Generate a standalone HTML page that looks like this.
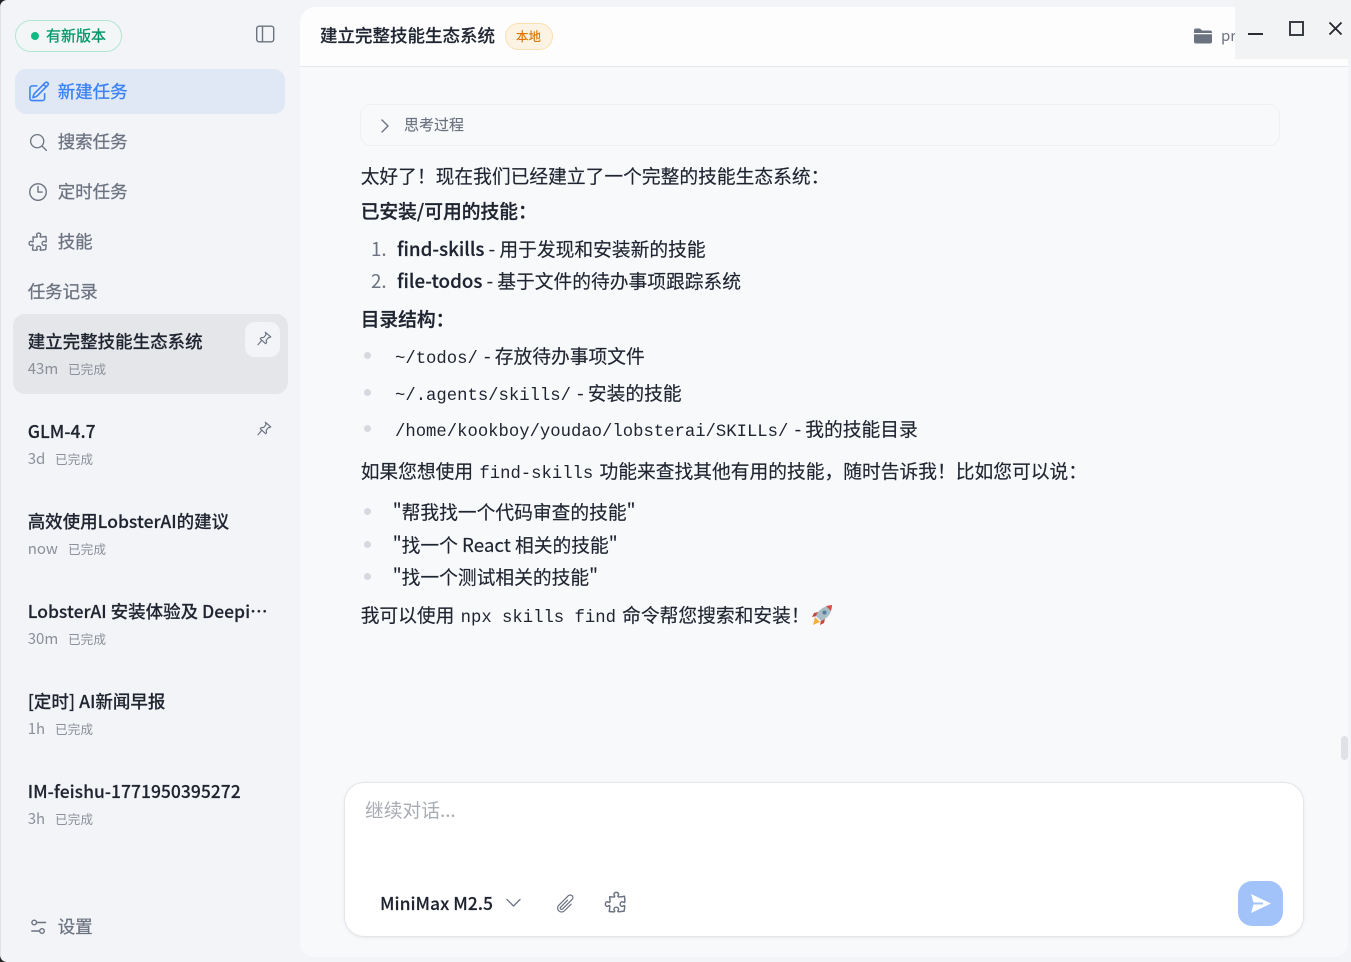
<!DOCTYPE html>
<html lang="zh-CN">
<head>
<meta charset="utf-8">
<title>LobsterAI</title>
<style>
html,body{margin:0;padding:0;width:1351px;height:962px;overflow:hidden;background:#f3f4f7;}
body{position:relative;font-family:"Noto Sans CJK SC","Liberation Sans",sans-serif;color:#1f2430;}
.t{position:absolute;white-space:nowrap;line-height:24px;height:24px;}
.abs{position:absolute;}
svg{position:absolute;overflow:visible;fill:none;}
.nav{font-size:17.5px;color:#6b7280;left:57.7px;-webkit-text-stroke:.25px #6b7280;}
.title{font-size:17.5px;color:#1f2430;left:27.7px;font-weight:500;-webkit-text-stroke:.15px #1f2430;}
.time{font-size:15px;color:#8b909a;left:27.7px;}
.st{font-size:12.7px;color:#8b909a;}
.b{font-size:18.75px;color:#1f2430;left:360.7px;-webkit-text-stroke:.15px #1f2430;}
.s{font-weight:500;-webkit-text-stroke:.3px #1f2430;}
.m{font-family:"Liberation Mono",monospace;font-size:17.25px;padding:0 2px;-webkit-text-stroke:0;}
.dot{position:absolute;width:7px;height:7px;border-radius:50%;background:#d6d9df;}
.li{font-size:18.75px;color:#1f2430;-webkit-text-stroke:.15px #1f2430;}
.li b{font-weight:500;-webkit-text-stroke:.2px #1f2430;}
</style>
</head>
<body>
<div class="abs" style="left:0;top:0;width:1351px;height:962px;background:#f3f4f7;"></div>
<div class="abs" style="left:0;top:0;width:1px;height:962px;background:#e2e3e6;"></div>

<!-- main panel -->
<div class="abs" style="left:300px;top:7px;width:1048px;height:950px;background:#f8f9fb;border-radius:16px 0 14px 14px;overflow:hidden;">
  <div class="abs" style="left:0;top:0;width:1048px;height:59px;background:#fdfdfe;border-bottom:1px solid #e3e6ee;"></div>
</div>

<!-- sidebar top -->
<div class="abs" style="left:15px;top:20px;width:105px;height:30px;border:1px solid #b3e6d0;border-radius:16px;background:#f3f6f6;"></div>
<div class="abs" style="left:31px;top:32px;width:8px;height:8px;border-radius:50%;background:#10b981;"></div>
<div class="t" style="left:46px;top:24px;font-size:15px;color:#059669;-webkit-text-stroke:.3px #059669;">有新版本</div>
<svg style="left:256px;top:25px;" width="18" height="18" viewBox="0 0 18 18"><rect x=".7" y="1.200" width="17" height="15.600" rx="2.500" stroke="#6b7280" stroke-width="1.400"/><path d="M6.500 1.200V16.800" stroke="#6b7280" stroke-width="1.400"/></svg>

<div class="abs" style="left:15px;top:69px;width:270px;height:45px;background:#e1e8f5;border-radius:11px;"></div>
<svg style="left:27px;top:80px;" width="23.500" height="23.500" viewBox="0 0 24 24"><path d="m16.862 4.487 1.687-1.688a1.875 1.875 0 1 1 2.652 2.652L10.582 16.070a4.500 4.500 0 0 1-1.897 1.130L6 18l.8-2.685a4.500 4.500 0 0 1 1.130-1.897l8.932-8.931Zm0 0L19.500 7.125M18 14v4.750A2.250 2.250 0 0 1 15.750 21H5.250A2.250 2.250 0 0 1 3 18.750V8.250A2.250 2.250 0 0 1 5.250 6H10" stroke="#3b82f6" stroke-width="1.600" stroke-linecap="round" stroke-linejoin="round"/></svg>
<div class="t nav" style="top:80px;color:#3b82f6;-webkit-text-stroke:.3px #3b82f6;">新建任务</div>

<svg style="left:28px;top:131.500px;" width="21" height="21" viewBox="0 0 24 24"><path d="m21 21-5.197-5.197m0 0A7.500 7.500 0 1 0 5.196 5.196a7.500 7.500 0 0 0 10.607 10.607Z" stroke="#6b7280" stroke-width="1.500" stroke-linecap="round" stroke-linejoin="round"/></svg>
<div class="t nav" style="top:130px;">搜索任务</div>

<svg style="left:27px;top:181px;" width="22" height="22" viewBox="0 0 24 24"><path d="M12 6v6h4.500m4.500 0a9 9 0 1 1-18 0 9 9 0 0 1 18 0Z" stroke="#6b7280" stroke-width="1.500" stroke-linecap="round" stroke-linejoin="round"/></svg>
<div class="t nav" style="top:180px;">定时任务</div>

<svg style="left:27px;top:231px;" width="22" height="22" viewBox="0 0 24 24"><path d="M14.250 6.087c0-.355.186-.676.401-.959.221-.29.349-.634.349-1.003 0-1.036-1.007-1.875-2.250-1.875s-2.250.84-2.250 1.875c0 .369.128.713.349 1.003.215.283.401.604.401.959a.64.64 0 0 1-.657.643 48.390 48.390 0 0 1-4.163-.3c.186 1.613.293 3.250.315 4.907a.656.656 0 0 1-.658.663c-.355 0-.676-.186-.959-.401a1.647 1.647 0 0 0-1.003-.349c-1.036 0-1.875 1.007-1.875 2.250s.84 2.250 1.875 2.250c.369 0 .713-.128 1.003-.349.283-.215.604-.401.959-.401.31 0 .555.26.532.57a48.039 48.039 0 0 1-.642 5.056c1.518.19 3.058.309 4.616.354a.64.64 0 0 0 .657-.643c0-.355-.186-.676-.401-.959a1.647 1.647 0 0 1-.349-1.003c0-1.035 1.008-1.875 2.250-1.875 1.243 0 2.250.84 2.250 1.875 0 .369-.128.713-.349 1.003-.215.283-.4.604-.4.959 0 .333.277.599.61.58a48.100 48.100 0 0 0 5.427-.63 48.050 48.050 0 0 0 .582-4.717.532.532 0 0 0-.533-.57c-.355 0-.676.186-.959.401-.29.221-.634.349-1.003.349-1.035 0-1.875-1.007-1.875-2.250s.84-2.250 1.875-2.250c.37 0 .713.128 1.003.349.283.215.604.401.96.401a.656.656 0 0 0 .658-.663 48.422 48.422 0 0 0-.37-5.360c-1.886.342-3.810.574-5.766.689a.578.578 0 0 1-.61-.58Z" stroke="#6b7280" stroke-width="1.500" stroke-linejoin="round"/></svg>
<div class="t nav" style="top:230px;">技能</div>

<div class="t nav" style="left:27.700px;top:280px;">任务记录</div>

<!-- tasks -->
<div class="abs" style="left:13px;top:314px;width:275px;height:80px;background:#e5e6e9;border-radius:12px;"></div>
<div class="abs" style="left:245px;top:322px;width:35px;height:35px;background:#f3f4f7;border-radius:10px;"></div>
<svg style="left:257px;top:331px;" width="15" height="15" viewBox="0 0 15 15"><path d="M8.300 1.200l5.500 4.700-1.300.7-.9-.2-2.400 2.900.4 2.300-1 1.100-5.400-5 1-1.100 2.400 0 2.400-2.900-.2-1zM4.400 9.800L1 13.800" stroke="#6b7280" stroke-width="1.150" stroke-linejoin="round" stroke-linecap="round"/></svg>
<div class="t title" style="top:330px;">建立完整技能生态系统</div>
<div class="t time" style="top:357px;">43m</div><div class="t st" style="left:68px;top:357px;">已完成</div>

<svg style="left:257px;top:421px;" width="15" height="15" viewBox="0 0 15 15"><path d="M8.300 1.200l5.500 4.700-1.300.7-.9-.2-2.400 2.900.4 2.300-1 1.100-5.400-5 1-1.100 2.400 0 2.400-2.900-.2-1zM4.400 9.800L1 13.800" stroke="#6b7280" stroke-width="1.150" stroke-linejoin="round" stroke-linecap="round"/></svg>
<div class="t title" style="top:420px;">GLM-4.7</div>
<div class="t time" style="top:447px;">3d</div><div class="t st" style="left:55px;top:447px;">已完成</div>

<div class="t title" style="top:510px;">高效使用LobsterAI的建议</div>
<div class="t time" style="top:537px;">now</div><div class="t st" style="left:68px;top:537px;">已完成</div>

<div class="t title" style="top:600px;">LobsterAI 安装体验及 Deepi…</div>
<div class="t time" style="top:627px;">30m</div><div class="t st" style="left:68px;top:627px;">已完成</div>

<div class="t title" style="top:690px;">[定时] AI新闻早报</div>
<div class="t time" style="top:717px;">1h</div><div class="t st" style="left:55px;top:717px;">已完成</div>

<div class="t title" style="top:780px;">IM-feishu-1771950395272</div>
<div class="t time" style="top:807px;">3h</div><div class="t st" style="left:55px;top:807px;">已完成</div>

<svg style="left:31px;top:919px;" width="15" height="16" viewBox="0 0 15 16"><circle cx="3.200" cy="3.500" r="2.300" stroke="#6b7280" stroke-width="1.400"/><path d="M5.800 3.500H14.500" stroke="#6b7280" stroke-width="1.400" stroke-linecap="round"/><circle cx="11" cy="12" r="2.300" stroke="#6b7280" stroke-width="1.400"/><path d="M.8 12H8.500" stroke="#6b7280" stroke-width="1.400" stroke-linecap="round"/></svg>
<div class="t nav" style="top:915px;">设置</div>

<!-- header -->
<div class="t" style="left:320px;top:24px;font-size:17.500px;font-weight:500;color:#1f2430;-webkit-text-stroke:.15px #1f2430;">建立完整技能生态系统</div>
<div class="abs" style="left:505px;top:23px;width:46px;height:25px;border:1px solid #fbdfae;background:#fdf3e3;border-radius:14px;"></div>
<div class="t" style="left:516px;top:24px;font-size:12.500px;color:#d97706;-webkit-text-stroke:.2px #d97706;">本地</div>
<svg style="left:1194px;top:28px;" width="18" height="16" viewBox="0 0 18 16"><path d="M0 2.500A2 2 0 0 1 2 .5h4l2 2h8A2 2 0 0 1 18 4.500v.5H0z" fill="#6b7280"/><path d="M0 6.200h18V13.500a2 2 0 0 1-2 2H2a2 2 0 0 1-2-2z" fill="#6b7280"/></svg>
<div class="t" style="left:1221px;top:24px;font-size:15px;color:#6b7280;">pr</div>

<!-- window controls -->
<div class="abs" style="left:1235px;top:0;width:116px;height:59px;background:#f2f3f5;"></div>
<div class="abs" style="left:1248px;top:33px;width:15px;height:2px;background:#2a2d33;"></div>
<div class="abs" style="left:1288.500px;top:21px;width:11px;height:11px;border:2px solid #3a3d43;"></div>
<svg style="left:1329px;top:22px;" width="13" height="13" viewBox="0 0 13 13"><path d="M.5.5l12 12M12.500.5l-12 12" stroke="#22252b" stroke-width="1.800"/></svg>

<!-- thinking -->
<div class="abs" style="left:360px;top:104px;width:918px;height:40px;border:1px solid #eef0f3;border-radius:11px;background:#f8f9fb;"></div>
<svg style="left:381px;top:119px;" width="8" height="14" viewBox="0 0 8 14"><path d="M1 1l6 6-6 6" stroke="#6b7280" stroke-width="1.400" stroke-linecap="round" stroke-linejoin="round"/></svg>
<div class="t" style="left:404px;top:112.500px;font-size:15px;color:#6b7280;-webkit-text-stroke:.15px #6b7280;">思考过程</div>

<!-- content -->
<div class="t b" style="top:164px;">太好了！现在我们已经建立了一个完整的技能生态系统：</div>
<div class="t b s" style="top:199px;">已安装/可用的技能：</div>
<div class="t li" style="left:371px;top:237px;color:#6b7280;-webkit-text-stroke:0;">1.</div>
<div class="t li" style="left:397px;top:237px;"><b>find-skills</b> - 用于发现和安装新的技能</div>
<div class="t li" style="left:371px;top:269px;color:#6b7280;-webkit-text-stroke:0;">2.</div>
<div class="t li" style="left:397px;top:269px;"><b>file-todos</b> - 基于文件的待办事项跟踪系统</div>
<div class="t b s" style="top:307px;">目录结构：</div>

<div class="dot" style="left:364px;top:352px;"></div>
<div class="t li" style="left:393px;top:344px;"><span class="m">~/todos/</span> - 存放待办事项文件</div>
<div class="dot" style="left:364px;top:389px;"></div>
<div class="t li" style="left:393px;top:381px;"><span class="m">~/.agents/skills/</span> - 安装的技能</div>
<div class="dot" style="left:364px;top:425px;"></div>
<div class="t li" style="left:393px;top:417px;"><span class="m">/home/kookboy/youdao/lobsterai/SKILLs/</span> - 我的技能目录</div>

<div class="t b" style="top:459px;">如果您想使用 <span class="m">find-skills</span> 功能来查找其他有用的技能，随时告诉我！比如您可以说：</div>

<div class="dot" style="left:364px;top:508px;"></div>
<div class="t li" style="left:392.700px;top:500px;">"帮我找一个代码审查的技能"</div>
<div class="dot" style="left:364px;top:541px;"></div>
<div class="t li" style="left:392.700px;top:533px;">"找一个 React 相关的技能"</div>
<div class="dot" style="left:364px;top:573px;"></div>
<div class="t li" style="left:392.700px;top:565px;">"找一个测试相关的技能"</div>

<div class="t b" style="top:603px;">我可以使用 <span class="m">npx skills find</span> 命令帮您搜索和安装！</div>
<svg style="left:811px;top:604px;" width="22" height="22" viewBox="0 0 22 22"><path d="M2 21l2-8 5 5z" fill="#f5b03c"/><path d="M7 8L3 9l-2 4 5-1zM14 15l-1 4-4 2 1-5z" fill="#c8483d"/><path d="M5 12C7 6 13 2 21 1c0 8-4 13-11 16z" fill="#a9bdc7"/><path d="M15 2l6-1-1 6z" fill="#d94c40"/><circle cx="13.500" cy="8.500" r="2" fill="#4f7f9c"/></svg>

<!-- input -->
<div class="abs" style="left:344px;top:782px;width:958px;height:153px;background:#fff;border:1px solid #e4e6ea;border-radius:20px;box-shadow:0 1px 3px rgba(0,0,0,.07);"></div>
<div class="t" style="left:365px;top:798px;font-size:18.750px;color:#a8acb3;">继续对话...</div>
<div class="t" style="left:380px;top:892px;font-size:17.500px;font-weight:500;color:#1f2430;-webkit-text-stroke:.15px #1f2430;">MiniMax M2.5</div>
<svg style="left:506px;top:898px;" width="15" height="10" viewBox="0 0 15 10"><path d="M1 1.500l6.500 6.500L14 1.500" stroke="#6b7280" stroke-width="1.300" stroke-linecap="round" stroke-linejoin="round"/></svg>
<svg style="left:554.500px;top:893px;" width="21" height="21" viewBox="0 0 24 24"><path d="m18.375 12.739-7.693 7.693a4.500 4.500 0 0 1-6.364-6.364l10.940-10.940A3 3 0 1 1 19.500 7.372L8.552 18.320m.009-.01-.01.01m5.699-9.941-7.810 7.810a1.500 1.500 0 0 0 2.112 2.130" stroke="#6b7280" stroke-width="1.400" stroke-linecap="round" stroke-linejoin="round"/></svg>
<svg style="left:603px;top:890px;" width="25" height="25" viewBox="0 0 24 24"><path d="M14.250 6.087c0-.355.186-.676.401-.959.221-.29.349-.634.349-1.003 0-1.036-1.007-1.875-2.250-1.875s-2.250.84-2.250 1.875c0 .369.128.713.349 1.003.215.283.401.604.401.959a.64.64 0 0 1-.657.643 48.390 48.390 0 0 1-4.163-.3c.186 1.613.293 3.250.315 4.907a.656.656 0 0 1-.658.663c-.355 0-.676-.186-.959-.401a1.647 1.647 0 0 0-1.003-.349c-1.036 0-1.875 1.007-1.875 2.250s.84 2.250 1.875 2.250c.369 0 .713-.128 1.003-.349.283-.215.604-.401.959-.401.31 0 .555.26.532.57a48.039 48.039 0 0 1-.642 5.056c1.518.19 3.058.309 4.616.354a.64.64 0 0 0 .657-.643c0-.355-.186-.676-.401-.959a1.647 1.647 0 0 1-.349-1.003c0-1.035 1.008-1.875 2.250-1.875 1.243 0 2.250.84 2.250 1.875 0 .369-.128.713-.349 1.003-.215.283-.4.604-.4.959 0 .333.277.599.61.58a48.100 48.100 0 0 0 5.427-.63 48.050 48.050 0 0 0 .582-4.717.532.532 0 0 0-.533-.57c-.355 0-.676.186-.959.401-.29.221-.634.349-1.003.349-1.035 0-1.875-1.007-1.875-2.250s.84-2.250 1.875-2.250c.37 0 .713.128 1.003.349.283.215.604.401.96.401a.656.656 0 0 0 .658-.663 48.422 48.422 0 0 0-.37-5.360c-1.886.342-3.810.574-5.766.689a.578.578 0 0 1-.61-.58Z" stroke="#6b7280" stroke-width="1.400" stroke-linejoin="round"/></svg>
<div class="abs" style="left:1238px;top:881px;width:45px;height:45px;background:#a1c3fa;border-radius:14px;"></div>
<svg style="left:1250px;top:893px;" width="22" height="21" viewBox="0 0 22 21"><path d="M1 1L21 10.500 1 20l2.500-8.500H13v-2H3.500z" fill="#fff"/></svg>

<!-- scrollbar -->
<div class="abs" style="left:1341px;top:736px;width:7px;height:24px;background:#dfe1e7;border-radius:4px;"></div>

<!-- corners -->
<svg style="left:0;top:0;" width="8" height="8" viewBox="0 0 8 8"><path d="M0 0H7A7 7 0 0 0 0 7z" fill="#222"/></svg>
<svg style="left:0;top:954px;" width="8" height="8" viewBox="0 0 8 8"><path d="M0 8H7A7 7 0 0 1 0 1z" fill="#222"/></svg>
</body>
</html>
